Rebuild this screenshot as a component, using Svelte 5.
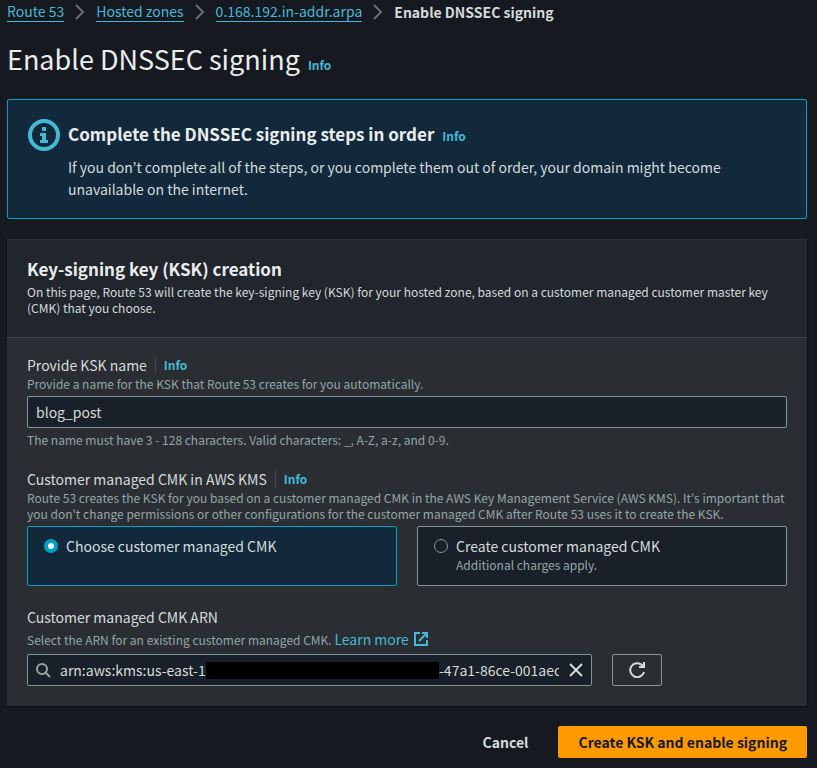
<script lang="ts">
	const crumbs = ['Route 53', 'Hosted zones', '0.168.192.in-addr.arpa'];

	let name = $state('blog_post');
	let source = $state('choose');
	let arn = $state('arn:aws:kms:us-east-1:');
	let arnTail = $state('-47a1-86ce-001aec');

	function clearArn() {
		arn = '';
		arnTail = '';
	}
</script>

<main>
	<nav aria-label="Breadcrumbs">
		{#each crumbs as crumb}
			<a href="#{crumb}">{crumb}</a>
			<svg class="chevron" viewBox="0 0 10 16" aria-hidden="true"><path d="M1 1l7 7-7 7" /></svg>
		{/each}
		<span class="current">Enable DNSSEC signing</span>
	</nav>

	<div class="title">
		<h1>Enable DNSSEC signing</h1>
		<a class="info" href="#info">Info</a>
	</div>

	<section class="alert">
		<svg class="alert-icon" viewBox="0 0 32 32" aria-hidden="true">
			<circle cx="16" cy="16" r="14" />
			<path d="M14 8h4v4h-4zM12 14h6v7h2v3h-8v-3h2v-4h-2z" />
		</svg>
		<div>
			<div class="alert-title">
				<h2>Complete the DNSSEC signing steps in order</h2>
				<a class="info" href="#steps">Info</a>
			</div>
			<p>
				If you don’t complete all of the steps, or you complete them out of order, your domain might
				become unavailable on the internet.
			</p>
		</div>
	</section>

	<form onsubmit={(e) => e.preventDefault()}>
		<section class="panel">
			<header>
				<h2>Key-signing key (KSK) creation</h2>
				<p>
					On this page, Route 53 will create the key-signing key (KSK) for your hosted zone, based on
					a customer managed customer master key (CMK) that you choose.
				</p>
			</header>

			<div class="fields">
				<div class="field">
					<div class="label-row">
						<label for="ksk-name">Provide KSK name</label>
						<a class="info divided" href="#ksk-name-info">Info</a>
					</div>
					<p class="hint">Provide a name for the KSK that Route 53 creates for you automatically.</p>
					<input class="box" id="ksk-name" type="text" bind:value={name} />
					<p class="hint">
						The name must have 3 - 128 characters. Valid characters: _, A-Z, a-z, and 0-9.
					</p>
				</div>

				<div class="field" role="radiogroup" aria-labelledby="cmk-label">
					<div class="label-row">
						<span id="cmk-label">Customer managed CMK in AWS KMS</span>
						<a class="info divided" href="#cmk-info">Info</a>
					</div>
					<p class="hint">
						Route 53 creates the KSK for you based on a customer managed CMK in the AWS Key Management
						Service (AWS KMS). It's important that you don't change permissions or other
						configurations for the customer managed CMK after Route 53 uses it to create the KSK.
					</p>
					<div class="tiles">
						<label class="tile" class:selected={source === 'choose'}>
							<input type="radio" name="source" value="choose" bind:group={source} />
							<span>Choose customer managed CMK</span>
						</label>
						<label class="tile" class:selected={source === 'create'}>
							<input type="radio" name="source" value="create" bind:group={source} />
							<span>
								Create customer managed CMK
								<small>Additional charges apply.</small>
							</span>
						</label>
					</div>
				</div>

				<div class="field">
					<div class="label-row">
						<label for="arn">Customer managed CMK ARN</label>
					</div>
					<p class="hint with-link">
						Select the ARN for an existing customer managed CMK.
						<a href="#learn-more">
							Learn more
							<svg class="external" viewBox="0 0 16 16" aria-hidden="true">
								<path d="M7 2H2v12h12V9M9 2h5v5M14 2L6 10" />
							</svg>
						</a>
					</p>
					<div class="arn-row">
						<div class="box search">
							<svg class="icon" viewBox="0 0 16 16" aria-hidden="true">
								<circle cx="7" cy="7" r="5" /><path d="M10 10l5 5" />
							</svg>
							<input class="arn" id="arn" type="text" bind:value={arn} />
							<span class="redacted"></span>
							<input class="arn-tail" type="text" aria-label="ARN key id" bind:value={arnTail} />
							<button class="clear" type="button" aria-label="Clear" onclick={clearArn}>
								<svg class="icon" viewBox="0 0 16 16" aria-hidden="true">
									<path d="M2 2l12 12M14 2L2 14" />
								</svg>
							</button>
						</div>
						<button class="refresh" type="button" aria-label="Refresh">
							<svg class="icon" viewBox="0 0 16 16" aria-hidden="true">
								<path d="M15 10a7 7 0 1 1-2-7l2 2M10 5h5V0" />
							</svg>
						</button>
					</div>
				</div>
			</div>
		</section>

		<div class="actions">
			<button class="link" type="button">Cancel</button>
			<button class="primary" type="submit">Create KSK and enable signing</button>
		</div>
	</form>
</main>

<style>
	:global(body) {
		background: #16191f;
	}
	main {
		padding: 2px 10px 10px 7px;
		color: #d5dbdb;
		font-family: 'Noto Sans CJK KR', 'Noto Sans', sans-serif;
		font-size: 14px;
		line-height: 22px;
	}
	h1,
	h2,
	p {
		margin: 0;
	}
	h2 {
		color: #eaeded;
		font-size: 17px;
		font-weight: 700;
	}
	a {
		color: #44b9d6;
		text-decoration: none;
	}
	input,
	button {
		box-sizing: border-box;
		margin: 0;
		font: inherit;
		color: inherit;
	}
	svg {
		flex: none;
		fill: none;
		stroke: currentColor;
		stroke-width: 2;
	}

	nav {
		display: flex;
		align-items: center;
		height: 20px;
		line-height: 19px;
	}
	nav a {
		border-bottom: 1px solid #44b9d6;
	}
	.chevron {
		width: 10px;
		height: 16px;
		margin: 0 11px;
		color: #687078;
	}
	.current {
		font-weight: 700;
	}

	.title {
		display: flex;
		align-items: baseline;
		gap: 8px;
		margin: 19px 0 22px;
	}
	h1 {
		color: #eaeded;
		font-size: 27px;
		font-weight: 400;
		line-height: 36px;
	}
	.info {
		font-size: 12px;
		font-weight: 700;
		line-height: 16px;
	}

	.alert {
		display: flex;
		gap: 8px;
		padding: 19px 20px 18px;
		border: 1px solid #00a1c9;
		border-radius: 2px;
		background: #12293b;
	}
	.alert-icon {
		width: 32px;
		height: 32px;
		color: #44b9d6;
		stroke-width: 4;
	}
	.alert-icon path {
		fill: currentColor;
		stroke: none;
	}
	.alert-title {
		display: flex;
		align-items: baseline;
		gap: 8px;
		margin-bottom: 7px;
	}
	.alert-title h2 {
		line-height: 30px;
	}

	.panel {
		margin-top: 20px;
		background: #2a2e33;
		box-shadow:
			0 1px 1px #0a0c10,
			1px 1px 1px #0f1217;
	}
	header {
		padding: 18px 20px 21px;
		border-top: 1px solid #2a2e33;
		border-bottom: 1px solid #414750;
		background: #21252c;
	}
	header p {
		margin-top: 4px;
		font-size: 12px;
		line-height: 16px;
	}
	.fields {
		display: flex;
		flex-direction: column;
		gap: 20px;
		padding: 16px 20px 20px;
	}
	.field {
		display: flex;
		flex-direction: column;
	}
	.label-row {
		display: flex;
		align-items: center;
	}
	.divided {
		margin-left: 8px;
		padding-left: 8px;
		border-left: 1px solid #414750;
		line-height: 18px;
	}
	.hint,
	small {
		color: #95a5a6;
		font-size: 12px;
		line-height: 16px;
	}
	.with-link {
		height: 22px;
		line-height: 22px;
	}
	.with-link a {
		display: inline-flex;
		align-items: center;
		gap: 4px;
		font-size: 14px;
	}
	.external {
		width: 16px;
		height: 16px;
	}
	.box {
		height: 32px;
		margin: 4px 0;
		padding: 0 8px;
		border: 1px solid #879596;
		border-radius: 2px;
		background: #1a2029;
	}

	.tiles {
		display: grid;
		grid-template-columns: 1fr 1fr;
		gap: 20px;
		margin-top: 4px;
	}
	.tile {
		display: flex;
		gap: 8px;
		padding: 8px 16px 12px;
		border: 1px solid #879596;
		border-radius: 2px;
		background: #1a2029;
	}
	.tile.selected {
		border-color: #00a1c9;
		background: #12293b;
	}
	.tile input {
		flex: none;
		appearance: none;
		width: 14px;
		height: 14px;
		margin-top: 4px;
		border: 1px solid #879596;
		border-radius: 50%;
	}
	.tile input:checked {
		border: 4px solid #00a1c9;
		background: #fff;
	}
	small {
		display: block;
	}

	.arn-row {
		display: grid;
		grid-template-columns: repeat(12, 1fr);
		gap: 20px;
		margin-top: 4px;
	}
	.search {
		display: flex;
		grid-column: span 9;
		align-items: center;
		box-sizing: border-box;
		margin: 0;
		padding: 0 7px;
	}
	.icon {
		width: 16px;
		height: 16px;
	}
	.search > .icon {
		color: #95a5a6;
	}
	.search input {
		flex: none;
		padding: 0;
		border: none;
		background: transparent;
	}
	.search .arn {
		width: 146px;
		margin-left: 9px;
	}
	.redacted {
		flex: 1;
		height: 17px;
		background: #000;
	}
	.search .arn-tail {
		width: 120px;
	}
	.clear {
		display: flex;
		margin-left: 9px;
		padding: 0;
		border: none;
		background: none;
	}
	.refresh {
		display: flex;
		grid-column: span 2;
		align-items: center;
		justify-content: center;
		justify-self: start;
		width: 50px;
		height: 32px;
		padding: 0;
		border: 1px solid #879596;
		border-radius: 2px;
		background: none;
	}

	.actions {
		display: flex;
		justify-content: flex-end;
		gap: 10px;
		margin-top: 20px;
	}
	.actions button {
		height: 32px;
		padding: 0 20px;
		border: none;
		border-radius: 2px;
		background: none;
		font-weight: 700;
	}
	.actions .primary {
		background: #ff9900;
		color: #16191f;
	}
</style>
